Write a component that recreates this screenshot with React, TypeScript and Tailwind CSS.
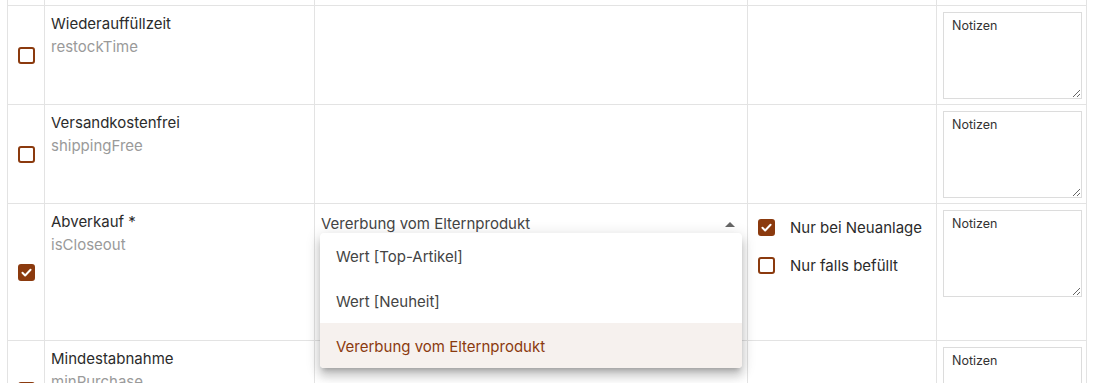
import React from 'react';

const Box: React.FC<{ checked?: boolean }> = ({ checked }) => (
  <span
    className={`flex h-[17px] w-[17px] shrink-0 items-center justify-center rounded-[3px] border-2 border-[#8b3a0e] ${checked ? 'bg-[#8b3a0e]' : 'bg-white'}`}
  >
    {checked && (
      <svg viewBox="0 0 24 24" className="h-[15px] w-[15px]" fill="none" stroke="white" strokeWidth={3.6} strokeLinecap="round" strokeLinejoin="round">
        <path d="M4.5 12.5l5 5L19.5 7" />
      </svg>
    )}
  </span>
);

const Notes: React.FC = () => (
  <textarea
    placeholder="Notizen"
    className="block h-[87px] w-[139px] resize border border-[#dcdcdc] px-[8px] py-[5px] text-[12.5px] leading-[16px] text-[#333] placeholder:text-[#333] outline-none"
  />
);

interface RowProps {
  label: string;
  field: string;
  checked?: boolean;
  height: string;
  select?: React.ReactNode;
  options?: React.ReactNode;
}

const Row: React.FC<RowProps> = ({ label, field, checked, height, select, options }) => (
  <div className={`flex border-b border-[#e3e3e3] ${height}`}>
    <div className="flex w-[37px] shrink-0 items-center justify-center border-r border-[#e3e3e3] pl-[1px]">
      <Box checked={checked} />
    </div>
    <div className="w-[270px] shrink-0 border-r border-[#e3e3e3] px-[6px] pt-[6px] leading-[23px]">
      <div className="text-[15px] text-[#2b2b2b]">{label}</div>
      <div className="text-[15px] text-[#9a9a9a]">{field}</div>
    </div>
    <div className="relative w-[433px] shrink-0 border-r border-[#e3e3e3]">{select}</div>
    <div className="w-[189px] shrink-0 border-r border-[#e3e3e3]">{options}</div>
    <div className="w-[150px] shrink-0 border-r border-[#e3e3e3] pl-[6px] pt-[6px]">
      <Notes />
    </div>
  </div>
);

const menuItems = ['Wert [Top-Artikel]', 'Wert [Neuheit]', 'Vererbung vom Elternprodukt'];

const InheritSelect: React.FC = () => (
  <>
    <div className="flex items-center justify-between pl-[6px] pr-[12px] pt-[9px] text-[15px] leading-[22px] text-[#444]">
      <span>Vererbung vom Elternprodukt</span>
      <svg viewBox="0 0 10 5" className="h-[5px] w-[10px]" fill="#666">
        <path d="M0 5L5 0l5 5z" />
      </svg>
    </div>
    <ul className="absolute left-[5px] top-[29px] z-10 w-[422px] overflow-hidden rounded-[4px] bg-white shadow-[0_5px_5px_-3px_rgba(0,0,0,0.2),0_8px_10px_1px_rgba(0,0,0,0.14),0_3px_14px_2px_rgba(0,0,0,0.12)]">
      {menuItems.map((item, i) => (
        <li
          key={item}
          className={`flex h-[45px] items-center px-[16px] pt-[4px] text-[15px] ${i === 2 ? 'bg-[#f6f1ee] text-[#8b3a0e]' : 'text-[#444]'}`}
        >
          {item}
        </li>
      ))}
    </ul>
  </>
);

const InheritOptions: React.FC = () => (
  <div className="flex flex-col gap-[21px] pl-[10px] pt-[15px] text-[15px] leading-[17px] text-[#2b2b2b]">
    <label className="flex items-center gap-[15px]">
      <Box checked />
      <span>Nur bei Neuanlage</span>
    </label>
    <label className="flex items-center gap-[15px]">
      <Box />
      <span>Nur falls befüllt</span>
    </label>
  </div>
);

export default function App() {
  return (
    <div className="h-[383px] overflow-hidden bg-white pl-[7px] font-['Inter','Liberation_Sans',sans-serif]">
      <div className="w-[1080px] border-l border-[#e3e3e3]">
        <div className="flex h-[6px] border-b border-[#e3e3e3]">
          <div className="w-[37px] border-r border-[#e3e3e3]" />
          <div className="w-[270px] border-r border-[#e3e3e3]" />
          <div className="w-[433px] border-r border-[#e3e3e3]" />
          <div className="w-[189px] border-r border-[#e3e3e3]" />
          <div className="w-[150px] border-r border-[#e3e3e3]" />
        </div>
        <Row label="Wiederauffüllzeit" field="restockTime" height="h-[99px]" />
        <Row label="Versandkostenfrei" field="shippingFree" height="h-[99px]" />
        <Row
          label="Abverkauf *"
          field="isCloseout"
          checked
          height="h-[137px]"
          select={<InheritSelect />}
          options={<InheritOptions />}
        />
        <Row label="Mindestabnahme" field="minPurchase" height="h-[99px]" />
      </div>
    </div>
  );
}
